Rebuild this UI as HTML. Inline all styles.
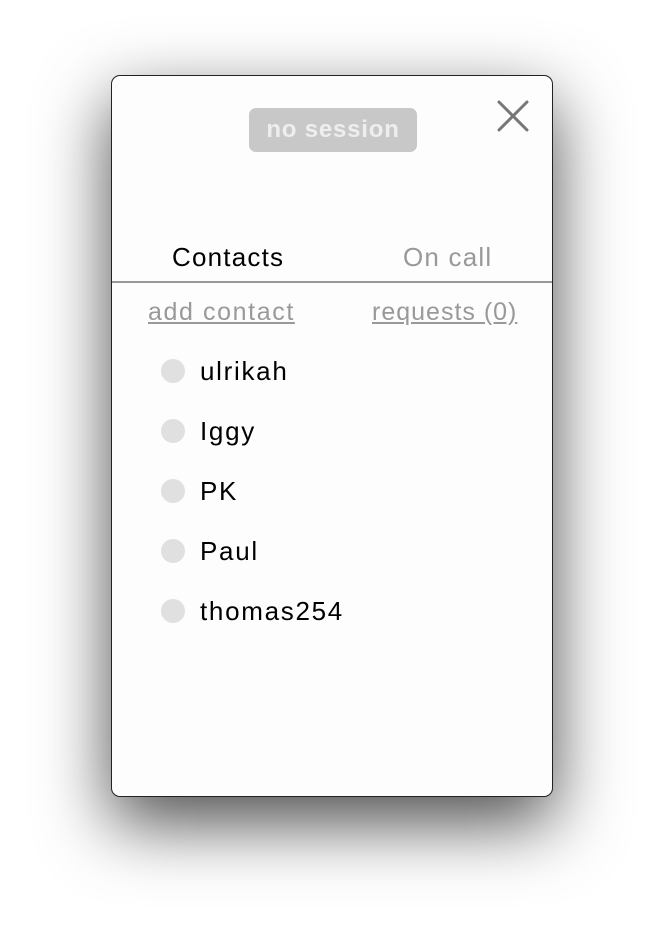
<!DOCTYPE html>
<html><head><style>
html,body{margin:0;padding:0;width:664px;height:944px;background:#fff;overflow:hidden;font-family:"Liberation Sans",sans-serif;}
.win{position:absolute;left:111px;top:75px;width:440px;height:720px;border:1px solid #222;border-radius:9px;background:#fdfdfd;box-shadow:0 26px 70px rgba(0,0,0,.7);}
.pill{position:absolute;left:137px;top:32px;width:168px;height:44px;background:#c8c8c8;border-radius:7px;color:#eee;font-size:24px;font-weight:bold;text-align:center;line-height:44px;letter-spacing:0.8px;}
.x{position:absolute;left:385px;top:24px;}
.tab{position:absolute;top:166px;font-size:26px;letter-spacing:1.2px;}
.line{position:absolute;left:0;top:205px;width:440px;height:2px;background:#999;}
.lnk{position:absolute;top:222px;font-size:25px;color:#999;text-decoration:underline;letter-spacing:1.6px;}
.row{position:absolute;left:49px;height:30px;font-size:26px;line-height:30px;color:#000;letter-spacing:1.7px;}
.row span{display:inline-block;width:24px;height:24px;border-radius:50%;background:#e0e0e0;vertical-align:middle;margin-right:15px;position:relative;top:-2px;}
</style></head><body>
<div class="win">
<div class="pill">no session</div>
<svg class="x" width="32" height="32" viewBox="0 0 32 32"><path d="M2 2L30 30M30 2L2 30" stroke="#777" stroke-width="3" stroke-linecap="round"/></svg>
<div class="tab" style="left:60px;color:#000">Contacts</div>
<div class="tab" style="left:291px;color:#999">On call</div>
<div class="line"></div>
<div class="lnk" style="left:36px">add contact</div>
<div class="lnk" style="left:260px;letter-spacing:1px">requests (0)</div>
<div class="row" style="top:280px"><span></span>ulrikah</div>
<div class="row" style="top:340px"><span></span>Iggy</div>
<div class="row" style="top:400px"><span></span>PK</div>
<div class="row" style="top:460px"><span></span>Paul</div>
<div class="row" style="top:520px"><span></span>thomas254</div>
</div>
</body></html>
